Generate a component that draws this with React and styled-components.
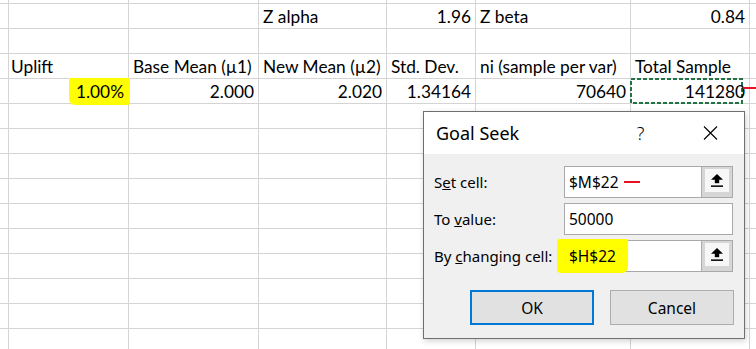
import React from 'react'
import styled, { createGlobalStyle } from 'styled-components'

const GlobalStyle = createGlobalStyle`
  html, body {
    margin: 0;
    padding: 0;
    background: #fff;
    overflow: hidden;
  }
`

const COLS = ['7px', '122px', '130px', '128px', '89px', '155px', '119px', '1fr']

const ROWS = [
  [],
  [null, null, null, { t: 'Z alpha' }, { t: '1.96', right: true }, { t: 'Z beta' }, { t: '0.84', right: true }],
  [],
  [null, { t: 'Uplift' }, { t: 'Base Mean (µ1)' }, { t: 'New Mean (µ2)' }, { t: 'Std. Dev.' }, { t: 'ni (sample per var)' }, { t: 'Total Sample' }],
  [
    null,
    { t: '1.00%', right: true, mark: true },
    { t: '2.000', right: true },
    { t: '2.020', right: true },
    { t: '1.34164', right: true },
    { t: '70640', right: true },
    { t: '141280', right: true, copied: true },
  ],
  [], [], [], [], [], [], [], [], [], [],
]

function UploadArrow() {
  return (
    <svg width="12" height="13" viewBox="0 0 12 13">
      <polygon points="0,5.8 6,0 12,5.8" fill="#000" />
      <rect x="3.8" y="5" width="4.4" height="4.2" fill="#000" />
      <rect x="0" y="11.4" width="12" height="1.5" fill="#000" />
    </svg>
  )
}

function CloseIcon() {
  return (
    <svg width="15" height="14" viewBox="0 0 15 14">
      <path d="M1 0.5 L14 13.5 M14 0.5 L1 13.5" stroke="#000" strokeWidth="1.1" fill="none" />
    </svg>
  )
}

function SheetCell({ cell }) {
  if (!cell) return <Cell />
  return (
    <Cell $right={cell.right}>
      {cell.mark && <CellMarker />}
      {cell.copied && (
        <>
          <Marquee width="113" height="26">
            <rect x="1" y="1" width="111" height="24" fill="none" stroke="#217346" strokeWidth="2" strokeDasharray="4 2" />
          </Marquee>
          <RedTick />
        </>
      )}
      <CellText>{cell.t}</CellText>
    </Cell>
  )
}

export default function App() {
  return (
    <>
      <GlobalStyle />
      <Page>
        <Sheet>
          {ROWS.map((row, r) =>
            COLS.map((_, c) => <SheetCell key={`${r}-${c}`} cell={row[c]} />)
          )}
        </Sheet>

        <Dialog>
          <TitleBar>
            <Title>Goal Seek</Title>
            <HelpGlyph>?</HelpGlyph>
            <CloseButton>
              <CloseIcon />
            </CloseButton>
          </TitleBar>
          <Body>
            <Form>
              <Label>
                S<u>e</u>t cell:
              </Label>
              <Field>
                <FieldText>
                  $M$22<RedDash />
                </FieldText>
                <RefButton>
                  <RefFace>
                    <UploadArrow />
                  </RefFace>
                </RefButton>
              </Field>

              <Label>
                To <u>v</u>alue:
              </Label>
              <Field>
                <FieldText>50000</FieldText>
              </Field>

              <Label>
                By <u>c</u>hanging cell:
              </Label>
              <Field>
                <FieldText>
                  <FieldMarker />
                  <MarkedText>$H$22</MarkedText>
                </FieldText>
                <RefButton>
                  <RefFace>
                    <UploadArrow />
                  </RefFace>
                </RefButton>
              </Field>
            </Form>
            <Buttons>
              <Button $primary>OK</Button>
              <Button>Cancel</Button>
            </Buttons>
          </Body>
        </Dialog>
      </Page>
    </>
  )
}

const Page = styled.div`
  position: relative;
  width: 756px;
  height: 349px;
  overflow: hidden;
  background: #fff;
`

const Sheet = styled.div`
  display: grid;
  grid-template-columns: ${COLS.join(' ')};
  grid-template-rows: 4px;
  grid-auto-rows: 25px;
  font-family: Lato, 'Liberation Sans', sans-serif;
  font-size: 17.3px;
  color: #000;
`

const Cell = styled.div`
  position: relative;
  box-sizing: border-box;
  border-right: 1px solid #d4d4d4;
  border-bottom: 1px solid #d4d4d4;
  display: flex;
  align-items: flex-end;
  justify-content: ${(p) => (p.$right ? 'flex-end' : 'flex-start')};
  padding: 0 4px 1px;
  white-space: nowrap;
  min-width: 0;
`

const CellText = styled.span`
  position: relative;
  z-index: 2;
`

const CellMarker = styled.span`
  position: absolute;
  right: -2px;
  top: -1px;
  bottom: -2px;
  width: 61px;
  background: #ffff00;
  border-radius: 0 0 2px 6px;
  z-index: 1;
`

const Marquee = styled.svg`
  position: absolute;
  left: -1px;
  top: -1px;
  z-index: 1;
`

const RedTick = styled.span`
  position: absolute;
  left: 112px;
  top: 8px;
  width: 20px;
  height: 2px;
  background: #e81123;
  z-index: 3;
`

const Dialog = styled.div`
  position: absolute;
  left: 423px;
  top: 111px;
  width: 322px;
  height: 228px;
  box-sizing: border-box;
  border: 1px solid #6f6f6f;
  background: #f0f0f0;
  box-shadow: 1px 2px 6px rgba(0, 0, 0, 0.18);
  display: flex;
  flex-direction: column;
  font-family: 'Noto Sans', 'Open Sans', sans-serif;
  color: #000;
  z-index: 5;
`

const TitleBar = styled.div`
  height: 42px;
  background: #fff;
  display: grid;
  grid-template-columns: 1fr 73px 67px;
  align-items: center;
`

const Title = styled.div`
  padding-left: 12px;
  font-size: 18px;
`

const HelpGlyph = styled.div`
  text-align: center;
  font-size: 18px;
  font-weight: 300;
`

const CloseButton = styled.div`
  display: flex;
  justify-content: center;
  align-items: center;
`

const Body = styled.div`
  flex: 1;
  padding: 12px 10px 0;
  display: flex;
  flex-direction: column;
`

const Form = styled.div`
  display: grid;
  grid-template-columns: 130px 169px;
  grid-auto-rows: 32px;
  row-gap: 5px;
  align-items: center;
`

const Label = styled.div`
  font-size: 15px;
  white-space: nowrap;
`

const Field = styled.div`
  height: 100%;
  box-sizing: border-box;
  border: 1px solid #a9a9a9;
  background: #fff;
  display: flex;
  align-items: stretch;
`

const FieldText = styled.div`
  position: relative;
  flex: 1;
  display: flex;
  align-items: center;
  padding-left: 4px;
  font-size: 15.5px;
`

const RedDash = styled.span`
  display: inline-block;
  width: 16px;
  height: 2.5px;
  margin-left: 5px;
  background: #e81123;
`

const FieldMarker = styled.span`
  position: absolute;
  left: -8px;
  top: -2px;
  bottom: -2px;
  width: 71px;
  background: #ffff00;
  border-radius: 2px 0 6px 4px;
`

const MarkedText = styled.span`
  position: relative;
`

const RefButton = styled.div`
  width: 31px;
  box-sizing: border-box;
  border-left: 1px solid #adadad;
  background: #d6d6d6;
  padding: 2px 3px 5px 3px;
  display: flex;
`

const RefFace = styled.div`
  flex: 1;
  background: #f7f7f7;
  display: flex;
  align-items: center;
  justify-content: center;
`

const Buttons = styled.div`
  display: flex;
  justify-content: flex-end;
  gap: 16px;
  margin-top: 18px;
`

const Button = styled.div`
  width: 124px;
  height: 35px;
  box-sizing: border-box;
  border: ${(p) => (p.$primary ? '2px solid #0078d7' : '1px solid #adadad')};
  background: #e1e1e1;
  display: flex;
  align-items: center;
  justify-content: center;
  font-size: 15.5px;
`
